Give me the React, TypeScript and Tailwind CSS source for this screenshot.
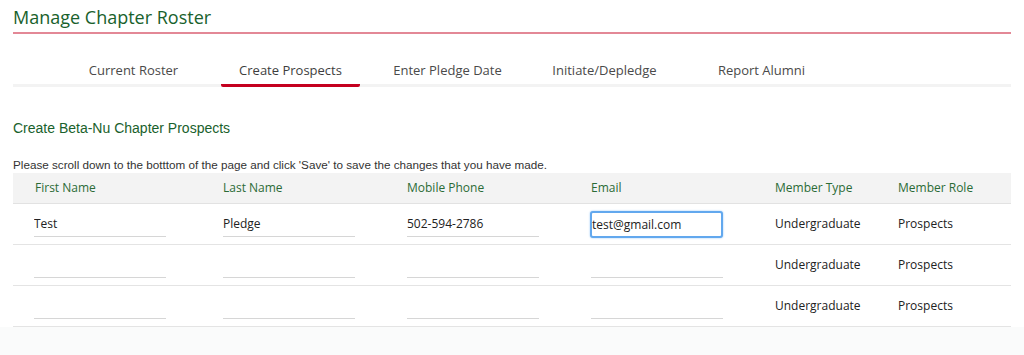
import { useState } from 'react';

const tabs = ['Current Roster', 'Create Prospects', 'Enter Pledge Date', 'Initiate/Depledge', 'Report Alumni'];

const columns = ['First Name', 'Last Name', 'Mobile Phone', 'Email', 'Member Type', 'Member Role'];

type Prospect = {
  first: string;
  last: string;
  phone: string;
  email: string;
};

const initialRows: Prospect[] = [
  { first: 'Test', last: 'Pledge', phone: '502-594-2786', email: 'test@gmail.com' },
  { first: '', last: '', phone: '', email: '' },
  { first: '', last: '', phone: '', email: '' },
];

function CellInput({ value, focused, onChange }: { value: string; focused?: boolean; onChange: (v: string) => void }) {
  return (
    <input
      value={value}
      onChange={(e) => onChange(e.target.value)}
      className={
        focused
          ? 'w-[133px] h-[27px] -ml-[1px] px-0 text-[12px] text-[#222] bg-white border-2 border-[#62a8ee] rounded-[3px] outline-none shadow-[0_0_2px_#8cc3f5]'
          : 'w-[132px] h-[26px] px-0 text-[12px] text-[#222] bg-transparent border-0 border-b border-[#d6d6d6] outline-none'
      }
    />
  );
}

export default function App() {
  const [active, setActive] = useState(1);
  const [rows, setRows] = useState(initialRows);

  const update = (i: number, key: keyof Prospect, v: string) => {
    setRows((r) => r.map((row, idx) => (idx === i ? { ...row, [key]: v } : row)));
  };

  return (
    <div className="w-full h-[355px] flex flex-col bg-white text-[#333]" style={{ fontFamily: '"Open Sans", sans-serif' }}>
      <div className="px-[13px] flex-1 flex flex-col">
        <h1 className="pt-[5px] h-[32px] text-[18px] leading-[24px] text-[#19612c]">Manage Chapter Roster</h1>
        <div className="h-[2px] bg-[#e38896]" />

        {/* tabs */}
        <div className="mt-[23px] relative">
          <div className="flex pl-[42px]">
            {tabs.map((t, i) => (
              <button
                key={t}
                onClick={() => setActive(i)}
                className="w-[157px] flex justify-center"
              >
                <span
                  className={
                    i === active
                      ? 'px-[18px] h-[30px] text-[13px] leading-[26px] text-[#3e3e3e] border-b-[3px] border-[#c4001f] rounded-[2px] relative z-10'
                      : 'px-[18px] h-[30px] text-[13px] leading-[26px] text-[#4a4a4a]'
                  }
                >
                  {t}
                </span>
              </button>
            ))}
          </div>
          <div className="absolute left-0 right-0 bottom-0 h-[3px] bg-[#f3f3f3]" />
        </div>

        <h2
          className="mt-[32px] text-[14px] leading-[18px] text-[#19612c]"
          style={{ fontFamily: '"Liberation Sans", Arial, sans-serif' }}
        >
          Create Beta-Nu Chapter Prospects
        </h2>
        <p
          className="mt-[21px] text-[11.7px] leading-[14px] text-[#333]"
          style={{ fontFamily: '"Liberation Sans", Arial, sans-serif' }}
        >
          Please scroll down to the botttom of the page and click 'Save' to save the changes that you have made.
        </p>

        {/* table */}
        <div className="mt-[1px]">
          <div className="grid grid-cols-[210px_184px_184px_184px_123px_1fr] h-[31px] items-center bg-[#f3f3f3] border-b border-[#e2e2e2] text-[12px] text-[#2b6b36]">
            {columns.map((c, i) => (
              <div key={c} className={i === 0 ? 'pl-[22px]' : ''}>
                {c}
              </div>
            ))}
          </div>
          {rows.map((row, i) => (
            <div
              key={i}
              className="grid grid-cols-[210px_184px_184px_184px_123px_1fr] h-[41px] items-center border-b border-[#e4e4e4] text-[12px] text-[#222]"
            >
              <div className="pl-[21px]">
                <CellInput value={row.first} onChange={(v) => update(i, 'first', v)} />
              </div>
              <div>
                <CellInput value={row.last} onChange={(v) => update(i, 'last', v)} />
              </div>
              <div>
                <CellInput value={row.phone} onChange={(v) => update(i, 'phone', v)} />
              </div>
              <div>
                <CellInput value={row.email} focused={i === 0} onChange={(v) => update(i, 'email', v)} />
              </div>
              <div>Undergraduate</div>
              <div>Prospects</div>
            </div>
          ))}
        </div>
      </div>
      <div className="h-[29px] bg-[#fafbfb]" />
    </div>
  );
}
